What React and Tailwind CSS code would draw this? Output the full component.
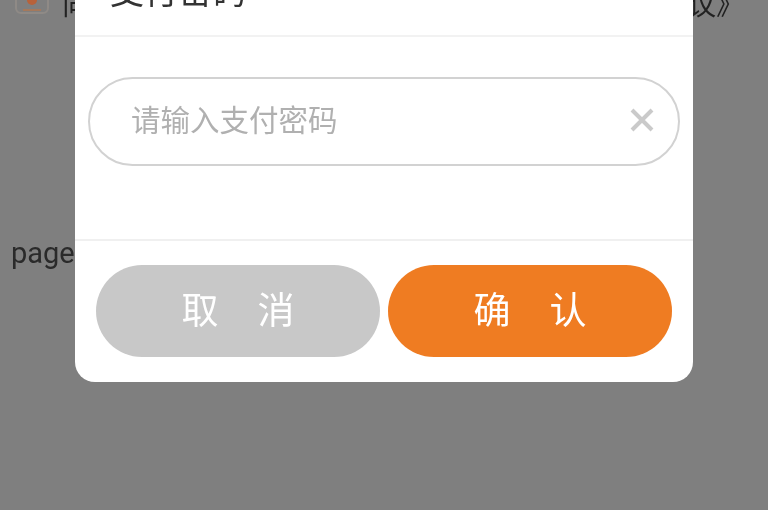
const cjk = "font-['Noto_Sans_CJK_SC','Noto_Sans',sans-serif]";

function App() {
    return (
        <div className={`relative h-[510px] w-[768px] overflow-hidden bg-[#7f7f7f] text-[#222] blur-[0.5px] ${cjk}`}>
            {/* page behind the overlay */}
            <div className="flex items-center justify-between pl-[15px] pr-[24px] mt-[-15px] h-[36px]">
                <div className="flex items-center gap-[13px]">
                    <svg width="34" height="34" viewBox="0 0 34 34" fill="none">
                        <rect x="1" y="2" width="32" height="25" rx="5" stroke="#8f8a86" strokeWidth="2" />
                        <circle cx="17" cy="14" r="5" fill="#b8623a" />
                        <path d="M8 24h18" stroke="#a5795c" strokeWidth="2" />
                    </svg>
                    <span className="text-[28px] leading-none">向</span>
                </div>
                <span className="text-[28px] leading-none">议》</span>
            </div>
            <p className="mt-[213px] pl-[11px] text-[29px] leading-[38px] text-[#2a2a2a] font-['Roboto',sans-serif]">page</p>

            {/* dialog */}
            <div className="absolute left-[75px] top-[-40px] flex h-[422px] w-[618px] flex-col rounded-[20px] bg-white">
                <div className="flex h-[77px] items-start border-b-2 border-[#f2f2f2] pl-[35px]">
                    <span className="mt-[-8px] text-[34px] leading-[76px] text-[#333]">支付密码</span>
                </div>
                <div className="flex h-[204px] items-start border-b-2 border-[#f0f0f0] px-[13px] pt-[40px]">
                    <div className="flex h-[89px] w-full items-center justify-between rounded-full border-2 border-[#d2d2d2] pl-[41px] pr-[22px]">
                        <span className="mt-[-6px] text-[29.5px] text-[#b0b0b0]">请输入支付密码</span>
                        <svg width="28" height="28" viewBox="0 0 28 28" fill="none" className="mt-[-3px]">
                            <path d="M4 4l20 20M24 4L4 24" stroke="#cacaca" strokeWidth="4" />
                        </svg>
                    </div>
                </div>
                <div className="flex gap-[8px] px-[21px] pt-[24px]">
                    <button className="flex h-[92px] w-[284px] items-center justify-center gap-[39px] rounded-full bg-[#c8c8c8] pb-[5px] text-[37px] text-white">
                        <span>取</span><span>消</span>
                    </button>
                    <button className="flex h-[92px] w-[284px] items-center justify-center gap-[39px] rounded-full bg-[#ef7c22] pb-[5px] text-[37px] text-white">
                        <span>确</span><span>认</span>
                    </button>
                </div>
            </div>
        </div>
    );
}

export default App;
